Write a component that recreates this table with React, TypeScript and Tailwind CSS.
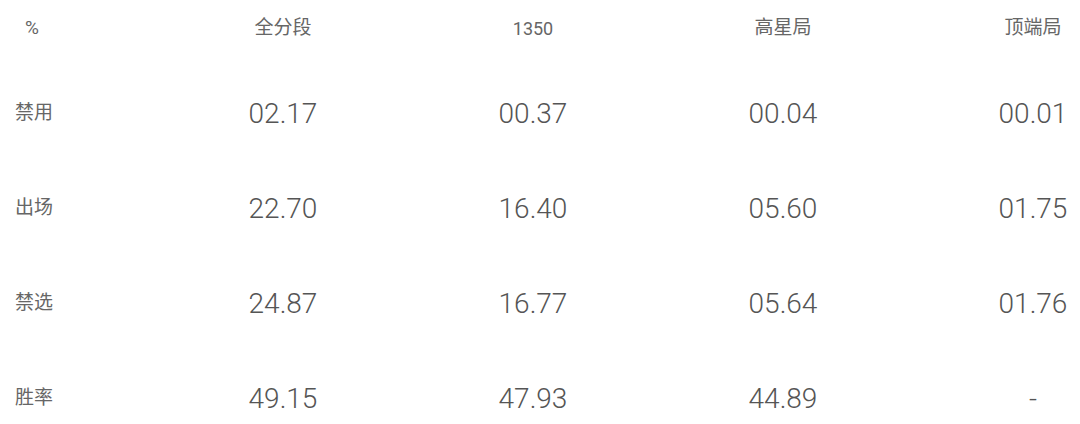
import React from "react";

const headers = ["全分段", "1350", "高星局", "顶端局"];
const rows: { label: string; values: string[] }[] = [
  { label: "禁用", values: ["02.17", "00.37", "00.04", "00.01"] },
  { label: "出场", values: ["22.70", "16.40", "05.60", "01.75"] },
  { label: "禁选", values: ["24.87", "16.77", "05.64", "01.76"] },
  { label: "胜率", values: ["49.15", "47.93", "44.89", "-"] },
];

const cjk = { fontFamily: 'Roboto, "Noto Sans CJK SC", sans-serif' };

export default function App() {
  return (
    <div className="w-[1080px] h-[424px] overflow-hidden bg-white text-[#555]" style={cjk}>
      <div className="grid grid-cols-[158px_250px_250px_250px_172px] h-[56px] items-center">
        <div className="pl-[25px] text-[19px] text-[#666]">%</div>
        {headers.map((h, i) => (
          <div key={i} className={`flex ${i === 3 ? "justify-start" : "justify-center"}`}>
            <div className={`w-[250px] shrink-0 text-center ${i === 1 ? "text-[18px]" : "text-[19px]"} text-[#666]`}>{h}</div>
          </div>
        ))}
      </div>
      <div className="pt-[10px]">
        {rows.map((r) => (
          <div key={r.label} className="grid grid-cols-[158px_250px_250px_250px_172px] h-[95px] items-center">
            <div className="pl-[15px] text-[19px] text-[#666]">{r.label}</div>
            {r.values.map((v, i) => (
              <div key={i} className={`flex ${i === 3 ? "justify-start" : "justify-center"}`}>
                <div className="w-[250px] shrink-0 text-center text-[28px] font-light">{v}</div>
              </div>
            ))}
          </div>
        ))}
      </div>
    </div>
  );
}
